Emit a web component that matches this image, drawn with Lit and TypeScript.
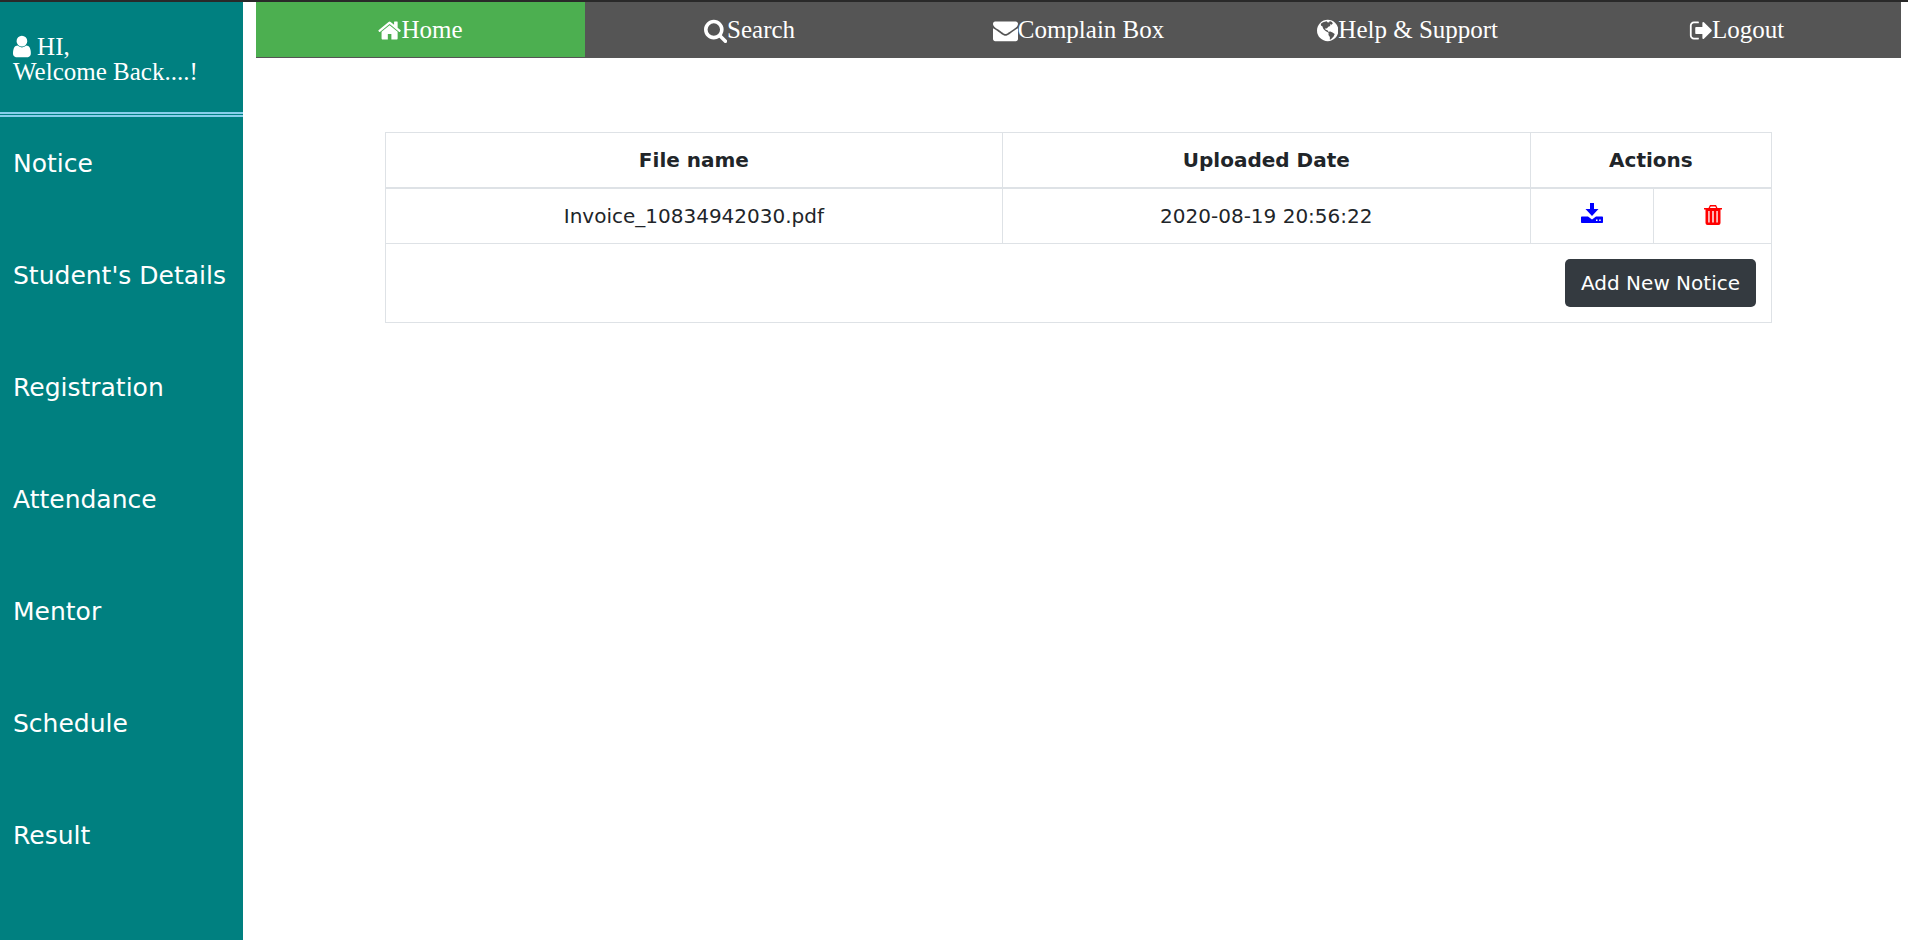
import { LitElement, html, css, svg } from "lit";
import { customElement, property } from "lit/decorators.js";

interface Glyph {
  box: string;
  shape: unknown;
}

const glyphs: Record<string, Glyph> = {
  user: {
    box: "256 0 1280 1792",
    shape: svg`<path d="M1536 1399q0 109-62.5 187t-150.5 78h-854q-88 0-150.5-78t-62.5-187q0-85 8.5-160.5t31.5-152 58.5-131 94-89 134.5-34.5q131 128 313 128t313-128q76 0 134.5 34.5t94 89 58.5 131 31.5 152 8.5 160.5zm-256-887q0 159-112.5 271.5t-271.5 112.5-271.5-112.5-112.5-271.5 112.5-271.5 271.5-112.5 271.5 112.5 112.5 271.5z"/>`,
  },
  home: {
    box: "64 0 1664 1792",
    shape: svg`<path d="M1472 992v480q0 26-19 45t-45 19h-384v-384h-256v384h-384q-26 0-45-19t-19-45v-480q0-1 .5-3t.5-3l575-474 575 474q1 2 1 6zm223-69l-62 74q-8 9-21 11h-3q-13 0-21-7l-692-577-692 577q-12 8-24 7-13-2-21-11l-62-74q-8-10-7-23.5t11-21.5l719-599q32-26 76-26t76 26l244 204v-195q0-14 9-23t23-9h192q14 0 23 9t9 23v408l219 182q10 8 11 21.5t-7 23.5z"/>`,
  },
  search: {
    box: "64 0 1664 1792",
    shape: svg`<path d="M1216 832q0-185-131.5-316.5t-316.5-131.5-316.5 131.5-131.5 316.5 131.5 316.5 316.5 131.5 316.5-131.5 131.5-316.5zm512 832q0 52-38 90t-90 38q-54 0-90-38l-343-342q-179 124-399 124-143 0-273.5-55.5t-225-150-150-225-55.5-273.5 55.5-273.5 150-225 225-150 273.5-55.5 273.5 55.5 225 150 150 225 55.5 273.5q0 220-124 399l343 343q37 37 37 90z"/>`,
  },
  envelope: {
    box: "0 0 1792 1792",
    shape: svg`<path d="M1792 710v794q0 66-47 113t-113 47h-1472q-66 0-113-47t-47-113v-794q44 49 101 87 362 246 497 345 57 42 92.500 65.500t94.500 48 110 24.500h2q51 0 110-24.500t94.500-48 92.500-65.500q170-123 498-345 57-39 100-87zm0-294q0 79-49 151t-122 123q-376 261-468 325-10 7-42.500 31t-54 38.500-52 32.500-57.500 27-50 9h-2q-23 0-50-9t-57.500-27-52-32.500-54-38.500-42.500-31q-91-64-262-182.500t-205-142.500q-62-42-117-115.500t-55-136.500q0-78 41.500-130t118.500-52h1472q65 0 112.500 47t47.500 113z"/>`,
  },
  globe: {
    box: "128 0 1536 1792",
    shape: svg`<path fill-rule="evenodd" d="M896 128a768 768 0 1 0 0 1536 768 768 0 1 0 0-1536zM400 420L560 300L820 240L900 330L1010 300L1040 220L1200 290L1260 400L1170 480L1060 440L1080 570L940 620L830 760L720 730L740 850L880 880L940 980L1080 960L1240 1040L1400 1150L1320 1330L1130 1520L1050 1560L1050 1370L950 1220L960 1060L740 940L590 780L500 580L420 560z"/>`,
  },
  logout: {
    box: "0 0 1664 1792",
    shape: svg`<path d="M704 1440q0 4 1 20t.5 26.5-3 23.5-10 19.5-20.5 6.5h-320q-119 0-203.5-84.5t-84.5-203.5v-704q0-119 84.5-203.5t203.5-84.5h320q13 0 22.5 9.5t9.5 22.5q0 4 1 20t.5 26.5-3 23.5-10 19.5-20.5 6.5h-320q-66 0-113 47t-47 113v704q0 66 47 113t113 47h312l11.5 1 11.5 3 8 5.5 7 9 2 13.5zm928-544q0 26-19 45l-544 544q-19 19-45 19t-45-19-19-45v-288h-448q-26 0-45-19t-19-45v-384q0-26 19-45t45-19h448v-288q0-26 19-45t45-19 45 19l544 544q19 19 19 45z"/>`,
  },
  download: {
    box: "0 0 22 22",
    shape: svg`<path fill-rule="evenodd" d="M9 0h4v6h4.500l-6.500 7-6.500-7h4.500zM.8 13.500h6.200l4 3 4-3h6.200q.8 0 .8.800v4.900q0 .8-.8.800h-20.400q-.8 0-.8-.8v-4.900q0-.8.800-.8zM15 16.500v1.500h1.500v-1.500zM18.200 16.500v1.500h1.500v-1.500z"/>`,
  },
  trash: {
    box: "0 0 18 22",
    shape: svg`<path fill-rule="evenodd" d="M6 2h6l1.500 3h4.500v1.500h-1.500v13.500q0 2-2 2h-11q-2 0-2-2v-13.500h-1.500v-1.500h4.500zM6.700 3.400l-.8 1.600h6.200l-.8-1.600zM4.300 8v11.500h1.300v-11.500zM8.300 8v11.500h1.400v-11.500zM12.400 8v11.500h1.300v-11.500z"/>`,
  },
};

@customElement("app-icon")
class AppIcon extends LitElement {
  @property() name = "";

  static styles = css`
    :host {
      display: inline-block;
      line-height: 0;
    }
    .glyph {
      height: 1em;
      width: auto;
      fill: currentColor;
    }
  `;

  render() {
    const glyph = glyphs[this.name];
    return html`<svg class="glyph" viewBox=${glyph.box} aria-hidden="true">${glyph.shape}</svg>`;
  }
}

const topLinks = [
  { icon: "home", label: "Home" },
  { icon: "search", label: "Search" },
  { icon: "envelope", label: "Complain Box" },
  { icon: "globe", label: "Help & Support" },
  { icon: "logout", label: "Logout" },
];

const sideLinks = [
  "Notice",
  "Student's Details",
  "Registration",
  "Attendance",
  "Mentor",
  "Schedule",
  "Result",
];

const files = [{ name: "Invoice_10834942030.pdf", date: "2020-08-19 20:56:22" }];

@customElement("app-root")
class AppRoot extends LitElement {
  static styles = css`
    :host {
      display: flex;
      box-sizing: border-box;
      min-height: 100vh;
      border-top: 2px solid #292929;
      background: #fff;
      color: #212529;
      font: 20px/30px Verdana, "DejaVu Sans", sans-serif;
    }
    a {
      color: inherit;
      text-decoration: none;
    }
    .side {
      flex: none;
      width: 243px;
      background: #008080;
      color: #fff;
    }
    .greeting {
      padding: 32px 13px;
      border-bottom: 5px double skyblue;
      font: 25px/25px "Liberation Serif", serif;
      height: 46px;
    }
    .greeting app-icon {
      vertical-align: -4px;
    }
    .side-links {
      display: flex;
      flex-direction: column;
      gap: 74px;
      padding: 28px 13px;
      font-size: 25px;
      line-height: 38px;
      white-space: nowrap;
    }
    .main {
      flex: 1;
      min-width: 0;
      padding: 0 7px 0 13px;
    }
    .top-links {
      display: grid;
      grid-template-columns: repeat(5, 1fr);
      background: #555;
      color: #fff;
      font: 25px/32px "Liberation Serif", serif;
    }
    .top-link {
      display: flex;
      justify-content: center;
      align-items: center;
      padding: 12px;
    }
    .current {
      background: #4caf50;
      box-shadow: inset 0 -1px #555;
    }
    .notices {
      width: calc(100% - 258px);
      margin: 74px auto 0;
      border-collapse: collapse;
      text-align: center;
      table-layout: fixed;
    }
    .name-col {
      width: 44.5%;
    }
    .date-col {
      width: 38.1%;
    }
    .download-col {
      width: 8.9%;
    }
    .notices th,
    .notices td {
      padding: 12px 15px;
      border: 1px solid #dee2e6;
    }
    .notices th {
      border-bottom-width: 2px;
    }
    .notices .action {
      padding: 12px 0;
    }
    .notices .footer {
      padding: 15px;
      text-align: right;
    }
    .icon-button {
      padding: 0;
      border: 0;
      background: none;
      font-size: 22px;
      line-height: 22px;
      vertical-align: -2px;
    }
    .download {
      color: blue;
    }
    .trash {
      color: #f00;
    }
    .add {
      height: 48px;
      padding: 0 16px;
      border: 0;
      border-radius: 5px;
      background: #343a40;
      color: #fff;
      font: inherit;
      vertical-align: top;
    }
  `;

  render() {
    return html`
      <aside class="side">
        <div class="greeting"><app-icon name="user"></app-icon> HI,<br />Welcome Back....!</div>
        <nav class="side-links">${sideLinks.map((label) => html`<a href="#">${label}</a>`)}</nav>
      </aside>
      <main class="main">
        <nav class="top-links">
          ${topLinks.map(
            (link, i) => html`<a class="top-link ${i === 0 ? "current" : ""}" href="#"
              ><app-icon name=${link.icon}></app-icon>${link.label}</a
            >`,
          )}
        </nav>
        <table class="notices">
          <colgroup>
            <col class="name-col" />
            <col class="date-col" />
            <col class="download-col" />
            <col />
          </colgroup>
          <thead>
            <tr>
              <th>File name</th>
              <th>Uploaded Date</th>
              <th colspan="2">Actions</th>
            </tr>
          </thead>
          <tbody>
            ${files.map(
              (file) => html`<tr>
                <td>${file.name}</td>
                <td>${file.date}</td>
                <td class="action">
                  <button class="icon-button download" aria-label="Download"><app-icon name="download"></app-icon></button>
                </td>
                <td class="action">
                  <button class="icon-button trash" aria-label="Delete"><app-icon name="trash"></app-icon></button>
                </td>
              </tr>`,
            )}
            <tr>
              <td class="footer" colspan="4"><button class="add">Add New Notice</button></td>
            </tr>
          </tbody>
        </table>
      </main>
    `;
  }
}
